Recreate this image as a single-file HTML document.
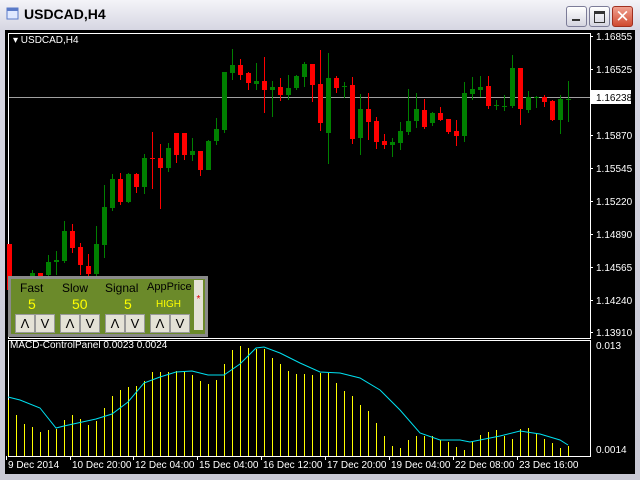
<!DOCTYPE html><html><head><style>
body{margin:0;width:640px;height:480px;overflow:hidden;background:#ece9d8;font-family:"Liberation Sans",sans-serif}
#win{position:absolute;left:0;top:0;width:640px;height:480px;background:linear-gradient(#f4f4f8,#d6d6e2 30px,#c8c8d4);}
.t{position:absolute;left:24px;top:6px;font-size:14px;font-weight:bold;color:#000}
.btn{position:absolute;top:6px;width:19px;height:19px;border:1px solid #7c7c98;border-radius:3px;background:linear-gradient(#fff,#d4d4e0)}
#chart{position:absolute;left:5px;top:30px;width:630px;height:444px;background:#000}
.lbl{position:absolute;color:#fff;font-size:10px;white-space:nowrap}
#panel{position:absolute;left:8px;top:276px;width:194px;height:55px;background:#6b8a2a;border:3px solid #8a8a8a;}
.h{position:absolute;top:2px;font-size:12px;color:#000}
.v{position:absolute;top:17px;font-size:14px;color:#ffff00}
.b{position:absolute;top:35px;width:18px;height:17px;background:#e4e2d6;border:1px solid #999;font-size:13px;text-align:center;line-height:17px;color:#000}
</style></head><body><div id="win">
<svg style="position:absolute;left:6px;top:7px" width="14" height="14"><rect x="1" y="1" width="11" height="11" fill="#dfe8ff" stroke="#5a7ac8"/><rect x="1" y="1" width="11" height="3" fill="#5a7ac8"/></svg>
<div class="t">USDCAD,H4</div>
<div class="btn" style="left:566px"><div style="position:absolute;left:5px;top:12px;width:8px;height:2px;background:#333"></div></div>
<div class="btn" style="left:589px"><div style="position:absolute;left:4px;top:4px;width:9px;height:8px;border:1px solid #333;border-top-width:3px"></div></div>
<div class="btn" style="left:612px;background:linear-gradient(#f0a090,#d04a30);border-color:#a03020;color:#fff;font-size:17px;text-align:center;line-height:19px">✕</div>
<div id="chart"><svg id="s" width="630" height="444" style="position:absolute;left:0;top:0"></svg>
<div class="lbl" style="left:8px;top:5px">▾ USDCAD,H4</div>
<div class="lbl" style="left:5px;top:310px">MACD-ControlPanel 0.0023 0.0024</div>
</div>
<div id="panel">
<div class="h" style="left:9px">Fast</div><div class="h" style="left:51px">Slow</div><div class="h" style="left:94px">Signal</div><div class="h" style="left:136px;font-size:11px">AppPrice</div>
<div class="v" style="left:17px">5</div><div class="v" style="left:61px">50</div><div class="v" style="left:113px">5</div><div class="v" style="left:145px;font-size:10px;top:20px">HIGH</div>
<div class="b" style="left:4px">Λ</div><div class="b" style="left:24px">V</div><div class="b" style="left:49px">Λ</div><div class="b" style="left:69px">V</div><div class="b" style="left:94px">Λ</div><div class="b" style="left:114px">V</div><div class="b" style="left:139px">Λ</div><div class="b" style="left:159px">V</div>
<div style="position:absolute;left:183px;top:1px;width:9px;height:50px;background:#e4e2d6;color:#d00;font-size:10px;text-align:center;line-height:40px">*</div>
</div>
</div>
<script>
const s=document.getElementById('s');let h='';
const ox=5,oy=30;
function L(x1,y1,x2,y2,c){h+=`<line x1="${x1-ox+.5}" y1="${y1-oy}" x2="${x2-ox+.5}" y2="${y2-oy}" stroke="${c}" stroke-width="1"/>`}
function H(x1,y,x2,c){h+=`<line x1="${x1-ox}" y1="${y-oy+.5}" x2="${x2-ox}" y2="${y-oy+.5}" stroke="${c}" stroke-width="1"/>`}
function R(x,y,w,hh,c){h+=`<rect x="${x-ox}" y="${y-oy}" width="${w}" height="${hh}" fill="${c}"/>`}
function T(x,y,t){h+=`<text x="${x-ox}" y="${y-oy}" fill="#fff" font-size="10" font-family="Liberation Sans">${t}</text>`}
h+=`<rect x="3.5" y="3.5" width="582" height="305" fill="none" stroke="#fff"/>`;
h+=`<rect x="3.5" y="310.5" width="582" height="116" fill="none" stroke="#fff"/>`;
H(9,97,590,'#a0a0a0');
const C=[[9,'r',244,290,244,300],[32,'g',273,280,270,285],[40,'r',273,280,273,285],[48,'g',262,275,255,278],[56,'g',260,262,251,275],[64,'g',231,261,221,263],[72,'r',231,248,224,253],[80,'r',247,265,243,275],[88,'r',266,274,254,276],[96,'g',244,274,226,276],[104,'g',207,245,185,258],[112,'g',179,208,174,211],[120,'r',179,202,173,205],[128,'g',174,202,173,203],[136,'r',174,187,173,193],[144,'g',158,187,154,194],[152,'r',158,159,132,189],[160,'r',158,168,144,209],[168,'g',148,168,143,172],[176,'r',133,155,133,163],[184,'r',133,155,133,160],[192,'g',151,155,138,161],[200,'r',151,170,151,176],[208,'g',141,170,140,170],[216,'g',129,141,118,145],[224,'g',72,130,72,133],[232,'g',65,73,49,80],[240,'r',65,75,59,80],[248,'r',73,83,72,90],[256,'g',81,84,63,90],[264,'r',81,90,57,113],[272,'g',87,90,81,117],[280,'r',87,95,78,101],[288,'g',88,95,75,100],[296,'g',76,88,75,90],[304,'g',64,77,62,87],[312,'r',64,85,64,102],[320,'r',84,123,50,131],[328,'g',78,133,53,164],[336,'r',78,88,76,93],[344,'g',86,87,82,98],[352,'r',85,139,77,144],[360,'g',109,138,94,155],[368,'r',109,122,93,140],[376,'r',121,142,117,149],[384,'r',141,145,134,149],[392,'g',142,145,138,157],[400,'g',131,143,122,150],[408,'g',121,132,89,135],[416,'g',109,121,93,128],[424,'r',110,127,99,129],[432,'g',113,123,112,126],[440,'r',113,120,107,121],[448,'r',119,132,119,134],[456,'r',131,136,120,146],[464,'g',93,136,82,142],[472,'g',89,94,77,100],[480,'g',87,90,76,97],[488,'r',86,106,76,109],[496,'g',105,106,100,110],[504,'g',106,107,95,111],[512,'g',68,106,55,108],[520,'r',68,109,68,125],[528,'g',97,110,91,113],[536,'g',97,98,96,108],[544,'r',97,102,95,107],[552,'r',101,120,100,121],[560,'g',99,120,95,134],[568,'g',99,100,81,122]];
C.forEach(c=>{const col=c[1]=='g'?'#008000':'#ff0000';L(c[0],c[4],c[0],c[5],col);R(c[0]-2,c[2],5,Math.max(1,c[3]-c[2]),col);});
const B=[400,415,424,427,432,430,429,420,415,419,425,421,408,396,390,387,386,381,372,372,372,371,372,375,381,384,380,364,350,346,348,349,349,358,364,371,374,374,375,373,373,383,391,396,405,411,423,436,446,448,440,436,436,436,440,442,447,450,442,435,432,430,436,439,429,428,434,439,443,448,446];
B.forEach((t,i)=>{const x=8+i*8;L(x,t,x,456,'#ffff00');});
const S=[[8,397],[20,400],[40,408],[56,428],[64,426],[96,419],[112,414],[128,402],[144,383],[160,377],[176,372],[192,371],[208,375],[224,375],[240,364],[256,348],[264,347],[280,353],[300,363],[320,372],[340,373],[360,378],[380,390],[400,410],[420,433],[440,440],[460,440],[470,442],[500,436],[520,431],[540,434],[560,440],[568,445]];
h+=`<path d="${S.map((p,i)=>(i?'L':'M')+(p[0]-ox)+' '+(p[1]-oy)).join('')}" fill="none" stroke="#00e0f0" stroke-width="1"/>`;
H(8,456,590,'#fff');
[['1.16855',36],['1.16525',69],['1.15870',135],['1.15545',168],['1.15220',201],['1.14890',234],['1.14565',267],['1.14240',300],['1.13910',332]].forEach(a=>{H(590,a[1],593,'#fff');T(596,a[1]+4,a[0])});
R(591,90,40,14,'#fff');h+=`<text x="${596-ox}" y="${101-oy}" fill="#000" font-size="10" font-family="Liberation Sans">1.16238</text>`;
T(596,349,'0.013');T(596,453,'0.0014');
[['9 Dec 2014',8],['10 Dec 20:00',72],['12 Dec 04:00',135],['15 Dec 04:00',199],['16 Dec 12:00',263],['17 Dec 20:00',327],['19 Dec 04:00',391],['22 Dec 08:00',455],['23 Dec 16:00',519]].forEach(a=>{L(a[1]-2,456,a[1]-2,460,'#fff');T(a[1],468,a[0])});
s.innerHTML=h;
</script></body></html>
